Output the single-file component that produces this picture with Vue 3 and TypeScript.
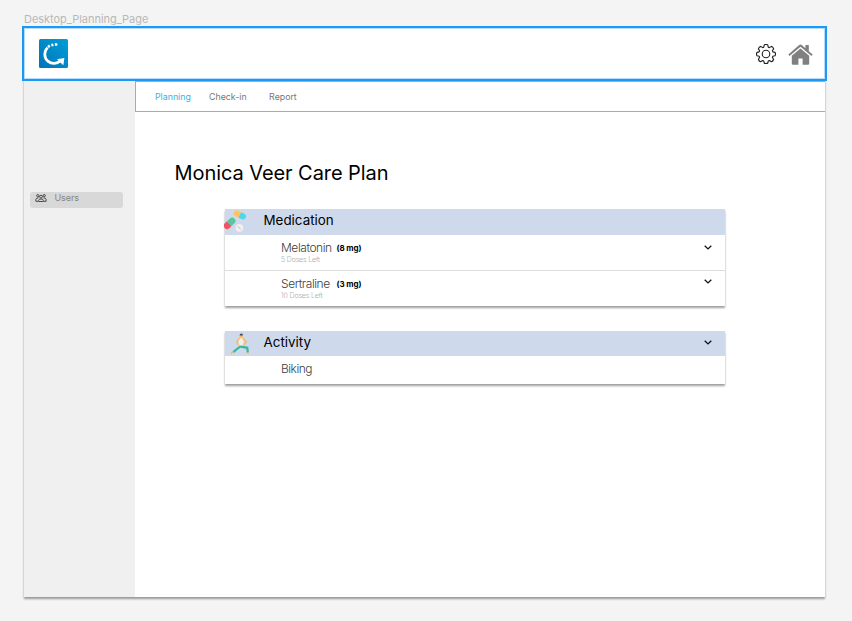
<script setup lang="ts">
interface Medication {
  name: string
  dose: string
  left: string
}

const tabs: string[] = ['Planning', 'Check-in', 'Report']
const activeTab = 'Planning'
const medications: Medication[] = [
  { name: 'Melatonin', dose: '(8 mg)', left: '5 Doses Left' },
  { name: 'Sertraline', dose: '(3 mg)', left: '10 Doses Left' },
]
const activities: string[] = ['Biking']
</script>

<template>
  <div class="canvas">
    <div class="frame-name">Desktop_Planning_Page</div>
    <div class="frame">
      <header class="topbar">
        <svg class="logo" viewBox="0 0 29 29">
          <defs>
            <linearGradient id="logoFill" x1="0" y1="1" x2="1" y2="0">
              <stop offset="0" stop-color="#0072b8" />
              <stop offset="1" stop-color="#009fd9" />
            </linearGradient>
          </defs>
          <rect width="29" height="29" rx="1.5" fill="url(#logoFill)" />
          <path d="M8.6 8.6C4.8 12.4 4.9 18.8 8.8 22.1C12.8 25.4 18.2 25 21.5 21.8" fill="none" stroke="#fff" stroke-width="2.7" />
          <path d="M18 20.2L25.4 19.1L24.3 26.3Z" fill="#fff" />
          <path d="M8.2 6.9l1.9-1.3 1.4 2.1-1.9 1.4zM12 4.9l2-.5.7 2.6-1.9.5zM15.9 4.1l2.6.3-.3 2.4-2.3-.1z" fill="#fff" />
        </svg>
        <div class="actions">
          <svg class="gear" viewBox="0 0 16 16" fill="none" stroke="#222" stroke-width=".9">
            <circle cx="8" cy="8" r="3" />
            <path d="M6.6.7Q8-.1 9.4.7L9.8 2.5L10.7 2.9L12.3 1.9Q13.8 2.5 14.1 3.9L13.1 5.4L13.5 6.3L15.2 6.7Q16 8 15.2 9.4L13.5 9.8L13.1 10.7L14.1 12.2Q13.7 13.8 12.3 14.2L10.7 13.2L9.8 13.6L9.4 15.3Q8 16 6.6 15.3L6.2 13.6L5.3 13.2L3.7 14.2Q2.3 13.8 1.9 12.2L2.9 10.7L2.5 9.8L.8 9.4Q0 8 .8 6.7L2.5 6.3L2.9 5.4L1.9 3.9Q2.3 2.5 3.7 1.9L5.3 2.9L6.2 2.5Z" stroke-linejoin="round" />
          </svg>
          <svg class="home" viewBox="0 0 25 21" fill="#808080">
            <path d="M12.5 4.4L21.2 11.7V19.6Q21.2 20.8 20 20.8H14.6V14.4H10.4V20.8H5Q3.8 20.8 3.8 19.6V11.7Z" />
            <path d="M.3 10.5L11.2 1.1Q12.5.1 13.8 1.1L17.4 4.2V.9H20.8V7.2L24.7 10.5L23.5 12L12.5 2.8L1.5 12Z" />
          </svg>
        </div>
      </header>
      <div class="body">
        <aside class="sidebar">
          <div class="side-item">
            <svg class="users" viewBox="0 0 12 8" fill="none" stroke="#333" stroke-width=".85">
              <circle cx="2.8" cy="1.7" r="1.15" />
              <circle cx="9.2" cy="1.7" r="1.15" />
              <circle cx="6" cy="2.7" r="1.4" />
              <path d="M3.6 7.5V6.4Q3.8 5 6 5T8.4 6.4V7.5ZM3.2 7.3H.9V5.3Q1.1 3.9 3.5 3.9M8.8 7.3H11.1V5.3Q10.9 3.9 8.5 3.9" />
            </svg>
            <span>Users</span>
          </div>
        </aside>
        <main class="main">
          <nav class="tabs">
            <a v-for="tab in tabs" :key="tab" class="tab" :class="{ active: tab === activeTab }">{{ tab }}</a>
          </nav>
          <h1 class="title">Monica Veer Care Plan</h1>
          <section class="card medication">
            <div class="card-head">
              <svg class="pills" viewBox="0 0 24 22">
                <g transform="rotate(-43 6 13)">
                  <path d="M6 9.7H3A3.3 3.3 0 0 0 3 16.3H6Z" transform="translate(-1 0)" fill="#ed5565" />
                  <path d="M5 9.7H9A3.3 3.3 0 0 1 9 16.3H5Z" fill="#5cc5a0" />
                </g>
                <g transform="rotate(26 16 5)">
                  <path d="M16.3 2H12.7A3 3 0 0 0 12.7 8H16.3Z" transform="translate(-.5 0)" fill="#ffc45c" />
                  <path d="M15.8 2H19.3A3 3 0 0 1 19.3 8H15.8Z" fill="#4fd5e8" />
                </g>
                <circle cx="15.4" cy="17.8" r="3.9" fill="#f4eef0" />
                <path d="M13.6 16.2L17.2 19.4" stroke="#b4a8b0" stroke-width=".9" stroke-dasharray="1.4 .6" />
              </svg>
              <h2>Medication</h2>
            </div>
            <div v-for="item in medications" :key="item.name" class="med-row">
              <div class="med-text">
                <div class="med-line">
                  <span class="med-name">{{ item.name }}</span>
                  <span class="dose">{{ item.dose }}</span>
                </div>
                <div class="left">{{ item.left }}</div>
              </div>
              <svg class="chevron" viewBox="0 0 8 5"><path d="M.7.7L4 3.9L7.3.7" /></svg>
            </div>
          </section>
          <section class="card activity">
            <div class="card-head">
              <svg class="yoga" viewBox="0 0 19 22">
                <path d="M9 5.2H13L13.4 12.8H8.8Z" fill="#f4eee3" />
                <path d="M9.6 5L6.7 8.8L8.8 12.2M12.7 5L16.3 8.8L13.6 12.2" fill="none" stroke="#f7b962" stroke-width="1.4" />
                <circle cx="11.2" cy="3.2" r="1.7" fill="#f7b962" />
                <path d="M9.5 2.4Q9.8.4 11.4.5T12.9 2.4Z" fill="#414b5a" />
                <path d="M10.8 13L3.2 19.1M10.8 13.6L17.3 14.8L17.8 19.6" fill="none" stroke="#39b6a0" stroke-width="2.2" />
                <path d="M3.4 18.6L.7 20.8M17.6 20H19" stroke="#f7b962" stroke-width="1.4" />
              </svg>
              <h2>Activity</h2>
              <svg class="chevron" viewBox="0 0 8 5"><path d="M.7.7L4 3.9L7.3.7" /></svg>
            </div>
            <div v-for="activity in activities" :key="activity" class="activity-row">{{ activity }}</div>
          </section>
        </main>
      </div>
    </div>
  </div>
</template>

<style>
body {
  margin: 0;
  background: #f4f4f4;
}
</style>

<style scoped>
.canvas {
  box-sizing: border-box;
  width: 852px;
  height: 621px;
  padding: 11px 25px 0 24px;
  background: #f4f4f4;
  font-family: Inter, sans-serif;
  color: #000;
  overflow: hidden;
}
.frame-name {
  height: 17px;
  line-height: 16px;
  font-size: 11px;
  color: #b8b8b8;
  letter-spacing: -0.03px;
}
.frame {
  display: flex;
  flex-direction: column;
  width: 801px;
  height: 569px;
  background: #fff;
  box-shadow: 0 1.5px 2px rgba(0, 0, 0, 0.38);
}
.topbar {
  box-sizing: border-box;
  display: flex;
  justify-content: space-between;
  flex: none;
  height: 55px;
  width: 805px;
  margin: -2px 0 0 -2px;
  padding: 11px 12px 0 15px;
  border: 2px solid #1c98f5;
  box-shadow: inset 0 0 0 1px #b5dcfc;
  background: #fff;
}
.logo {
  width: 29px;
  height: 29px;
}
.actions {
  display: flex;
  gap: 12.5px;
  padding-top: 5px;
}
.gear {
  width: 20px;
  height: 20px;
}
.home {
  width: 25px;
  height: 21px;
}
.body {
  display: flex;
  flex: 1;
}
.sidebar {
  width: 111px;
  background: #f0f0f0;
}
.side-item {
  display: flex;
  box-sizing: border-box;
  width: 93px;
  height: 16px;
  margin: 111px 0 0 6px;
  padding: 2px 0 0 5px;
  gap: 7.5px;
  border-radius: 3px;
  background: #d8d8d8;
  font-size: 9px;
  line-height: 8px;
  color: #858585;
}
.side-item span {
  letter-spacing: -0.08px;
}
.users {
  width: 12px;
  height: 8px;
}
.main {
  flex: 1;
}
.tabs {
  box-sizing: border-box;
  display: flex;
  height: 31px;
  padding-left: 19px;
  border: 1px solid #aaa;
  border-width: 1px 0 1px 1px;
  font-size: 8.8px;
  line-height: 30px;
  color: #777;
}
.tab {
  margin-right: 18.2px;
}
.tab:nth-child(2) {
  margin-right: 22.5px;
}
.active {
  color: #38b3dc;
}
.title {
  margin: 48px 0 0 39.5px;
  font-size: 20px;
  line-height: 26px;
  font-weight: 400;
  letter-spacing: -0.07px;
}
.card {
  width: 500px;
  margin-left: 90px;
  background: #fff;
  box-shadow: 0 1.5px 2px rgba(0, 0, 0, 0.38);
}
.medication {
  height: 97px;
  margin-top: 23px;
}
.activity {
  height: 53px;
  margin-top: 25px;
}
.card-head {
  display: flex;
  height: 26px;
  background: #cedaec;
}
.activity .card-head {
  height: 25px;
}
h2 {
  width: 440.5px;
  margin: 0;
  font-size: 13.4px;
  line-height: 22px;
  font-weight: 400;
}
.pills {
  width: 24px;
  height: 22px;
  margin: 1px 15.5px 0 -1px;
}
.yoga {
  width: 19px;
  height: 22px;
  margin: 2px 14.5px 0 5px;
}
.med-row {
  box-sizing: border-box;
  display: flex;
  justify-content: space-between;
  height: 35px;
  padding: 5px 13px 0 56px;
}
.med-row + .med-row {
  height: 36px;
  border-top: 1px solid #dcdcdc;
}
.med-line {
  display: flex;
  line-height: 15px;
}
.med-name {
  width: 55.5px;
  font-size: 12px;
  font-weight: 300;
  letter-spacing: -0.44px;
  color: #404040;
}
.dose {
  font-size: 8px;
  font-weight: 700;
  line-height: 16px;
  letter-spacing: -0.1px;
}
.left {
  font-size: 7px;
  line-height: 7px;
  font-weight: 200;
  letter-spacing: -0.12px;
  color: #777;
}
.chevron {
  flex: none;
  width: 8px;
  height: 5px;
  margin-top: 5px;
}
.chevron path {
  fill: none;
  stroke: #111;
  stroke-width: 1.3;
}
.med-row + .med-row .chevron {
  margin-top: 3px;
}
.activity .chevron {
  margin: 8.5px 0 0;
}
.activity-row {
  padding-left: 56px;
  font-size: 12px;
  line-height: 26px;
  font-weight: 300;
  letter-spacing: -0.5px;
  color: #404040;
}
</style>
